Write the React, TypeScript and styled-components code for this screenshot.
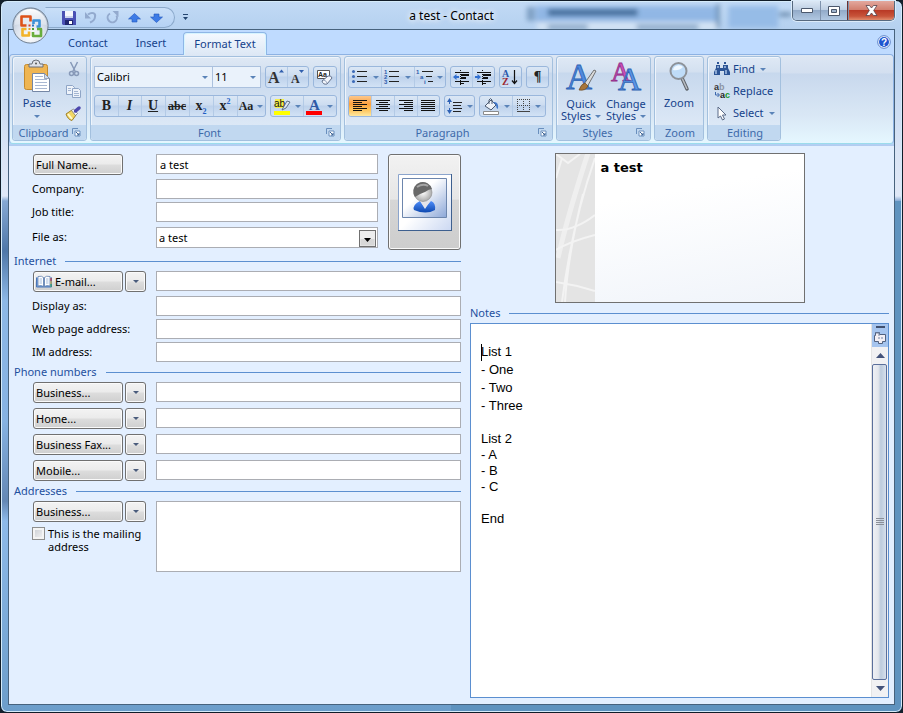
import React from "react";
import styled, { createGlobalStyle, css } from "styled-components";

const ui = `"Noto Sans", "Open Sans", sans-serif`;
const serif = `"Liberation Serif", serif`;
const navy = "#15428b";
const line = "#5b8fd0";

const GlobalStyle = createGlobalStyle`
  * { box-sizing: border-box; }
  html, body, #root { height: 100%; }
  body { margin: 0; background: #14202c; font: 11px/14px ${ui}; color: #000; overflow: hidden; }
  button, input, select, textarea { font: inherit; color: inherit; margin: 0; border-radius: 0; }
  button { padding: 0; border: 0; background: none; }
  svg { display: block; flex: none; overflow: visible; }
`;

/* ---------- window frame ---------- */

const Window = styled.div`
  position: relative;
  display: flex;
  flex-direction: column;
  min-height: 100%;
  padding: 0 7px 7px;
  border: 1px solid #101c28;
  border-radius: 7px;
  background: linear-gradient(90deg, transparent 50%, #5f93bf 50%) 0 200px / 100% 100% no-repeat,
    linear-gradient(180deg, #c2daf5 0, #b4d0ef 30px, #d9e4f5 150px, #dfe8f7 195px, #86a9d4 200px, #4f77a8 250px, #8db8e6 300px, #86b2e2 420px, #6488b5 500px, #8ebae9 520px, #6c9dca 100%);
  box-shadow: inset 0 0 0 1px #d5ebfa;
`;

const Glass = styled.svg`
  position: absolute;
  top: 1px;
  left: 1px;
  width: calc(100% - 2px);
  height: 28px;
  overflow: hidden;
`;

const TitleBar = styled.header`
  position: relative;
  display: grid;
  grid-template-columns: 1fr auto 1fr;
  height: 28px;
`;

const QuickAccess = styled.div`
  display: flex;
  align-items: center;
  gap: 7px;
  width: 130px;
  height: 21px;
  margin: 6px 0 0 37px;
  padding-left: 15px;
  border: 1px solid #8ba9cb;
  border-left-color: transparent;
  border-radius: 0 11px 11px 0;
  background: linear-gradient(#c9dff8, #b5d2f4);
`;

const QuickArea = styled.div`
  display: flex;
  align-items: flex-start;
`;

const IconButton = styled.button`
  display: flex;
  align-items: center;
  justify-content: center;
  width: 15px;
  height: 18px;
`;

const Customize = styled(IconButton)`
  margin: 7px 0 0 3px;
`;

const WindowTitle = styled.h1`
  margin: 0;
  padding-top: 7px;
  font-size: 12px;
  font-weight: 400;
  line-height: 16px;
  text-shadow: 0 0 6px #fff, 0 0 6px #fff;
`;

const Captions = styled.div`
  display: flex;
  justify-self: end;
  height: 20px;
  border: 1px solid #56697f;
  border-top: 0;
  border-radius: 0 0 5px 5px;
  overflow: hidden;
  box-shadow: 0 0 0 1px #dcebf9;
`;

const Caption = styled.button<{ $close?: boolean }>`
  display: flex;
  align-items: center;
  justify-content: center;
  width: ${(p) => (p.$close ? 47 : 27)}px;
  border-left: ${(p) => (p.$close ? "1px solid #6b3030" : "0")};
  background: ${(p) =>
    p.$close
      ? "linear-gradient(#e3a99f 0, #d28070 45%, #b93a26 50%, #c8543a 80%, #e08c6d)"
      : "linear-gradient(#dce8f5 0, #bfd0e4 45%, #93abc9 50%, #b1c8e2)"};
  & + & { box-shadow: inset 1px 0 #7f93ad; }
`;

const Orb = styled.button`
  position: absolute;
  top: 6px;
  left: 11px;
  z-index: 2;
`;

const Client = styled.div`
  position: relative;
  flex: 1;
  display: flex;
  flex-direction: column;
  border: 1px solid #47627d;
  background: #e3efff;
`;

/* ---------- ribbon ---------- */

const TabRow = styled.nav`
  display: flex;
  align-items: flex-end;
  height: 24px;
  padding: 0 3px 0 45px;
  background: #bfdbff;
`;

const Tab = styled.button<{ $active?: boolean }>`
  position: relative;
  z-index: 1;
  height: 23px;
  padding: 0 ${(p) => (p.$active ? 10 : 14)}px;
  color: ${navy};
  white-space: nowrap;
  ${(p) =>
    p.$active &&
    css`
      margin: 0 0 -1px 3px;
      border: 1px solid #8fb6e6;
      border-bottom: 0;
      border-radius: 4px 4px 0 0;
      background: linear-gradient(#f4f9ff, #dde8f5);
      box-shadow: inset 1px 1px #d6f4ff, inset -1px 0 #d6f4ff;
    `}
`;

const Help = styled.button`
  align-self: center;
  margin-left: auto;
`;

const Ribbon = styled.section`
  display: flex;
  gap: 3px;
  height: 90px;
  padding: 1px 2px 2px;
  border: 1px solid #8db2e3;
  border-bottom-color: #9bdcec;
  border-radius: 4px;
  background: linear-gradient(#dde7f4 0, #d3dff0 18px, #c8d8ed 19px, #d9e7f5 60px, #e5f7ff 100%);
`;

const RibbonBack = styled.div`
  padding-bottom: 2px;
  background: linear-gradient(#bfdbff, #bfdbff 86px, #b0cbef 100%);
`;

const Group = styled.fieldset`
  display: flex;
  flex-direction: column;
  height: 85px;
  margin: 0;
  padding: 0;
  min-width: 0;
  border: 1px solid #a3c0de;
  border-radius: 3px;
  background: linear-gradient(#dfe9f5 0, #d3e0f0 15px, #c7d8ed 16px, #dce8f6 68px);
  box-shadow: inset 1px 1px #eef4fb;
`;

const GroupBody = styled.div<{ $tools?: boolean }>`
  flex: 1;
  display: flex;
  flex-direction: ${(p) => (p.$tools ? "column" : "row")};
  gap: ${(p) => (p.$tools ? 7 : 3)}px;
  padding: ${(p) => (p.$tools ? "9px 3px 0" : "0 3px")};
`;

const GroupLabel = styled.div`
  display: grid;
  grid-template-columns: 1fr 14px;
  align-items: center;
  height: 15px;
  padding-left: 2px;
  border-radius: 0 0 3px 3px;
  background: #c1d8f0;
  color: #3e6aaa;
  text-align: center;
`;

const LabelText = styled.span<{ $wide?: boolean }>`
  grid-column: ${(p) => (p.$wide ? "1 / 3" : "1")};
`;

const ToolRow = styled.div`
  display: flex;
  gap: 4px;
  height: 22px;
`;

const ToolSet = styled.div`
  display: flex;
  border: 1px solid #9ab7dc;
  border-radius: 3px;
  background: linear-gradient(#dbe7f5 0, #ccdcf0 45%, #bdd1eb 50%, #d2e2f5);
  overflow: hidden;
`;

const Tool = styled.button<{ $w?: number; $on?: boolean }>`
  display: flex;
  align-items: center;
  justify-content: center;
  gap: 4px;
  width: ${(p) => p.$w ?? 23}px;
  color: #222;
  ${(p) => p.$on && css`background: linear-gradient(#fcc78b 0, #fba03f 40%, #fdc45c 70%, #ffe8a0);`}
  & + & { box-shadow: inset 1px 0 #b3cae6; }
`;

const Glyph = styled.span<{ $size?: number; $italic?: boolean; $line?: string }>`
  font: ${(p) => (p.$italic ? "italic" : "normal")} 700 ${(p) => p.$size ?? 14}px/18px ${serif};
  text-decoration: ${(p) => p.$line ?? "none"};
  white-space: nowrap;
`;

const Script = styled.span<{ $up?: boolean }>`
  color: #1f5fc4;
  font-size: 8px;
  vertical-align: ${(p) => (p.$up ? "super" : "sub")};
  line-height: 8px;
`;

const SelectBox = styled.div<{ $w: number }>`
  display: grid;
  align-items: center;
  width: ${(p) => p.$w}px;
  border: 1px solid #abc1de;
  background: #eaf2fb;
  & > * { grid-area: 1 / 1; }
  & > svg { justify-self: end; margin-right: 4px; pointer-events: none; }
  & + & { margin-left: -4px; border-left: 0; }
`;

const PlainSelect = styled.select`
  appearance: none;
  width: 100%;
  height: 20px;
  padding: 0 2px;
  border: 0;
  background: transparent;
`;

const BigButton = styled.button<{ $w: number }>`
  display: flex;
  flex-direction: column;
  align-items: center;
  width: ${(p) => p.$w}px;
  padding-top: 4px;
  color: ${navy};
  line-height: 12px;
  & > svg:first-child { margin-bottom: 5px; }
`;

const WithArrow = styled.span`
  display: flex;
  align-items: center;
  gap: 4px;
`;

const ArrowSlot = styled.span`
  padding-top: 6px;
`;

const SmallStack = styled.div<{ $w: number; $start?: boolean }>`
  display: flex;
  flex-direction: column;
  align-items: ${(p) => (p.$start ? "flex-start" : "center")};
  width: ${(p) => p.$w}px;
  padding-top: 1px;
`;

const SmallButton = styled.button`
  display: flex;
  align-items: center;
  gap: 3px;
  height: 22px;
  padding-left: 3px;
  color: ${navy};
`;

const ButtonText = styled.span`
  margin-right: 2px;
`;

/* ---------- form ---------- */

const Content = styled.main`
  flex: 1;
  display: grid;
  grid-template-columns: 447fr 419fr;
  gap: 9px;
  padding: 7px 5px 6px;
`;

const Form = styled.form`
  padding-top: 1px;
`;

const Identity = styled.div`
  display: grid;
  grid-template-columns: 1fr 73px;
  gap: 10px;
  height: 99px;
`;

const Row = styled.div<{ $pitch?: number }>`
  display: grid;
  grid-template-columns: 124px 1fr;
  align-items: start;
  height: ${(p) => p.$pitch ?? 23}px;
  padding-left: 18px;
`;

const Heading = styled.h2`
  display: flex;
  align-items: center;
  gap: 9px;
  height: 16px;
  margin: 0 0 2px;
  color: #1f4f9e;
  font-size: 11px;
  font-weight: 400;
  &::after { content: ""; flex: 1; height: 1px; background: ${line}; }
`;

const Label = styled.label`
  line-height: 20px;
`;

const Field = styled.input`
  width: 100%;
  height: 20px;
  padding: 0 3px;
  border: 1px solid #abadb3;
  background: #fff;
`;

const Address = styled.textarea`
  width: 100%;
  height: 71px;
  border: 1px solid #abadb3;
  resize: none;
`;

const Pair = styled.div`
  display: flex;
  gap: 2px;
  padding-left: 1px;
`;

const PushButton = styled.button<{ $w?: number }>`
  display: flex;
  align-items: center;
  justify-content: ${(p) => (p.$w ? "center" : "flex-start")};
  gap: 3px;
  width: ${(p) => p.$w ?? 90}px;
  height: 21px;
  padding: 0 2px;
  border: 1px solid #707070;
  border-radius: 3px;
  background: linear-gradient(#f3f3f3 0, #ebebeb 48%, #dddddd 52%, #cfcfcf);
  box-shadow: inset 0 0 0 1px #fafafa;
  white-space: nowrap;
`;

const FileAs = styled.div`
  display: grid;
  align-items: center;
  height: 21px;
  border: 1px solid #abadb3;
  background: #fff;
  & > * { grid-area: 1 / 1; }
  & > svg { justify-self: end; margin-right: 1px; pointer-events: none; }
`;

const Photo = styled.button`
  display: flex;
  align-items: center;
  justify-content: center;
  height: 96px;
  border: 1px solid #707070;
  border-radius: 3px;
  background: linear-gradient(#f2f2f2 0, #e6e6e6 47%, #d6d6d6 48%, #cdcdcd);
  box-shadow: inset 0 0 0 1px #fafafa;
`;

const Mailing = styled.label`
  display: flex;
  gap: 3px;
  padding-top: 5px;
  line-height: 13px;
`;

const Check = styled.input`
  appearance: none;
  flex: none;
  width: 13px;
  height: 13px;
  border: 1px solid #8e8f8f;
  background: linear-gradient(135deg, #c8ccd2, #f6f6f6);
  box-shadow: inset 0 0 0 2px #f4f4f4;
`;

/* ---------- card and notes ---------- */

const Side = styled.div`
  display: flex;
  flex-direction: column;
`;

const Card = styled.article`
  display: flex;
  align-self: center;
  width: 250px;
  height: 150px;
  margin-bottom: 2px;
  border: 1px solid #707070;
  background: linear-gradient(170deg, #ffffff 30%, #f0f4fa);
`;

const CardName = styled.strong`
  padding: 6px;
  font: 700 13px/16px "DejaVu Sans", sans-serif;
`;

const Notes = styled.div`
  flex: 1;
  display: flex;
  border: 1px solid ${line};
  background: #fff;
`;

const NoteText = styled.div`
  flex: 1;
  padding: 19px 10px 0;
  font: 13px/16px "Liberation Sans", Arial, sans-serif;
  outline: none;
`;

const NoteLine = styled.p<{ $loose?: boolean }>`
  margin: 0;
  height: ${(p) => (p.$loose ? 18 : 16)}px;
  line-height: ${(p) => (p.$loose ? 18 : 16)}px;
`;

const Caret = styled.span`
  display: inline-block;
  width: 1px;
  height: 17px;
  margin-right: -1px;
  vertical-align: middle;
  background: #000;
`;

const ScrollBar = styled.div`
  display: flex;
  flex-direction: column;
  width: 17px;
  border-left: 1px solid #e4e4e4;
  background: #f1f1f3;
`;

const Ruler = styled.button`
  height: 23px;
  background: #a5c4ee;
`;

const ScrollStep = styled(IconButton)`
  width: 16px;
  height: 17px;
`;

const Thumb = styled.div`
  flex: 1;
  display: flex;
  align-items: center;
  justify-content: center;
  margin-right: 1px;
  border: 1px solid #5b6f9b;
  border-radius: 2px;
  background: linear-gradient(90deg, #eef0f5, #e3e6ec 40%, #bccbdd 60%, #d7e0ec);
`;

/* ---------- icons ---------- */

const Arrow = ({ color = "#5a83b8" }: { color?: string }) => (
  <svg width="6" height="3" viewBox="0 0 6 3"><path d="M0 0h6L3 3z" fill={color} /></svg>
);

const Launcher = () => (
  <svg width="9" height="9" viewBox="0 0 9 9" fill="none" stroke="#6a8fbd">
    <path d="M.5 6V.5H6" /><path d="M3 3h5v5H3z" fill="#fff" /><path d="M4 4l3 3M7 5v2H5" stroke="#3d6496" />
  </svg>
);

const OfficeLogo = () => (
  <svg width="37" height="37" viewBox="0 0 37 37">
    <defs>
      <radialGradient id="orb" cx=".5" cy=".8" r=".8">
        <stop offset="0" stopColor="#fff" /><stop offset=".5" stopColor="#dde3ed" /><stop offset="1" stopColor="#aebdce" />
      </radialGradient>
      <linearGradient id="orbTop" x2="0" y2="1"><stop stopColor="#fff" /><stop offset="1" stopColor="#e5eaf2" stopOpacity=".6" /></linearGradient>
    </defs>
    <circle cx="18.5" cy="18.5" r="17.6" fill="url(#orb)" stroke="#707f91" />
    <path d="M2.500 18a16 16 0 0 1 32 0q-16-3-32 0z" fill="url(#orbTop)" />
    <g fill="none" strokeWidth="2.600" strokeLinejoin="round">
      <path d="M14.500 18.500H9.500V9.500h9v5" stroke="#de5219" />
      <path d="M21.500 17v-3.500h6v6h-3" stroke="#3b91d8" />
      <path d="M14.500 22h-4v6.500h6.500v-4" stroke="#f2b32a" />
      <path d="M21 25v4h8v-7h-4" stroke="#69ad3c" />
    </g>
    <path d="M16.500 17.500h2v2h-2z" fill="#d63e2a" /><path d="M20 17.500h2v2h-2z" fill="#2b79c2" />
    <path d="M16.500 21h2v2h-2z" fill="#e9a020" /><path d="M20 21h2v2h-2z" fill="#4c9b35" />
  </svg>
);

const Save = () => (
  <svg width="14" height="14" viewBox="0 0 14 14">
    <path d="M0 0h13l1 1v13H1l-1-1z" fill="#4950b4" /><path d="M3 0h8v7H3z" fill="#f4f6fc" />
    <path d="M3 5h8v2H3z" fill="#cbd3ec" /><path d="M3 9h8v5H3z" fill="#20266e" /><path d="M7 10h3v3H7z" fill="#fff" />
  </svg>
);

const Undo = () => (
  <svg width="13" height="13" viewBox="0 0 13 13" fill="none" stroke="#93aace" strokeWidth="2">
    <path d="M4 3.500C8 .5 12 2 11 6c-.3 3-2.500 4.500-5 5.500" /><path d="M1 1v6.500h6z" fill="#93aace" stroke="none" />
  </svg>
);

const Redo = () => (
  <svg width="13" height="13" viewBox="0 0 13 13" fill="none" stroke="#93aace" strokeWidth="2">
    <path d="M4 2.500a4.700 4.700 0 1 0 6.500 2" /><path d="M6.500 0h6v6z" fill="#93aace" stroke="none" />
  </svg>
);

const Nav = ({ down }: { down?: boolean }) => (
  <svg width="13" height="10" viewBox="0 0 13 10">
    {down ? (
      <path d="M4 1h5v3h3.500l-6 5.500L.5 4H4z" fill="#3d7be6" stroke="#2458bd" strokeWidth=".6" />
    ) : (
      <path d="M6.500.5l6 5.500H9v3H4V6H.5z" fill="#3d7be6" stroke="#2458bd" strokeWidth=".6" />
    )}
  </svg>
);

const Paste = () => (
  <svg width="28" height="31" viewBox="0 0 28 31">
    <rect x="1.500" y="3.500" width="23" height="25" rx="2" fill="#efb552" stroke="#c48a2e" />
    <path d="M6 6h14V3h-3a4 4 0 0 0-8 0H6z" fill="#dfe2e7" stroke="#6a6f78" /><circle cx="13" cy="2.500" r="1" fill="#555" />
    <path d="M9.500 12.500h12l5 5v13h-17z" fill="#fff" stroke="#7587a5" /><path d="M21.500 12.500v5h5z" fill="#d5deec" stroke="#7587a5" strokeWidth=".7" />
    <path d="M12 15.500h8M12 18.500h12M12 21.500h12M12 24.500h12M12 27.500h12" stroke="#a9b8d2" />
  </svg>
);

const Cut = () => (
  <svg width="14" height="16" viewBox="0 0 14 16" fill="none" stroke="#8799b8" strokeWidth="1.500">
    <path d="M3.500 1l5 10M10.500 1l-5 10" /><circle cx="4.500" cy="12.500" r="2" /><circle cx="9.500" cy="12.500" r="2" />
  </svg>
);

const Copy = () => (
  <svg width="15" height="14" viewBox="0 0 15 14" fill="#eef3fa" stroke="#8fa5c6">
    <path d="M.5 1.500h6l2 2v7h-8z" /><path d="M6.500 4.500h6l2 2v7h-8z" /><path d="M2 4.500h3M2 6.500h3M8 7.500h4M8 9.500h5M8 11.500h5" strokeWidth=".8" />
  </svg>
);

const Brush = () => (
  <svg width="17" height="15" viewBox="0 0 17 15">
    <path d="M1 8l6-4 4 5-4 5.500C4 14 2 11 1 8z" fill="#f2d766" stroke="#a08127" /><path d="M3 8l4 5" stroke="#fff8cf" strokeWidth="2" />
    <path d="M6.500 4.500l2-1.500 4 4.500-2 2z" fill="#fff" stroke="#666" strokeWidth=".7" /><path d="M10.500 5L14 2" stroke="#4d48ae" strokeWidth="3.500" strokeLinecap="round" />
  </svg>
);

const GrowA = ({ shrink }: { shrink?: boolean }) => (
  <svg width="17" height="18" viewBox="0 0 17 18">
    <text x={shrink ? 2 : 0} y="15" fontFamily="Liberation Serif, serif" fontWeight="700" fontSize={shrink ? 12 : 16} fill="#333">A</text>
    <path d={shrink ? "M10 2h5l-2.500 3z" : "M11 4.500h5L13.500 1.500z"} fill="#315fae" />
  </svg>
);

const ClearFormat = () => (
  <svg width="18" height="18" viewBox="0 0 18 18">
    <path d="M1.500 2.500h12v8h-12z" fill="#fff" stroke="#555" />
    <text x="2" y="9" fontFamily="Liberation Sans, sans-serif" fontWeight="700" fontSize="7" fill="#222">Aa</text>
    <path d="M6 13l6-5q3-1 4 2l-5 6q-4 1-5-3z" fill="#f3f6fb" stroke="#63718c" /><path d="M7 12q3 0 4 3" stroke="#9aa8c0" fill="none" />
  </svg>
);

const Highlight = () => (
  <svg width="17" height="17" viewBox="0 0 17 17">
    <path d="M1 1h9v9H1z" fill="#f5ee4c" /><text x="0" y="9" fontFamily="Liberation Sans, sans-serif" fontSize="10" fill="#111">ab</text>
    <path d="M9 10l4-7 3 1-4 6-4 2z" fill="#dce6f4" stroke="#56677f" strokeWidth=".9" /><path d="M0 13h16v4H0z" fill="#ff0" />
  </svg>
);

const FontColor = () => (
  <svg width="17" height="17" viewBox="0 0 17 17">
    <text x="3" y="12" fontFamily="Liberation Serif, serif" fontWeight="700" fontSize="15" fill="#2f5aa5">A</text><path d="M0 13h16v4H0z" fill="#f00" />
  </svg>
);

const Bullets = ({ kind }: { kind: "dot" | "num" | "multi" }) => (
  <svg width="17" height="16" viewBox="0 0 17 16">
    {kind === "multi" ? (
      <path d="M6 2.500h11M10 7.500h6M12 12.500h5" stroke="#222" />
    ) : (
      <path d="M5 2.500h10M5 7.500h10M5 12.500h10" stroke="#222" />
    )}
    {kind === "dot" &&
      [2.5, 7.5, 12.5].map((y) => <circle key={y} cx="1.500" cy={y} r="1.500" fill="#3c6ab8" />)}
    {kind !== "dot" &&
      (kind === "num" ? ["1", "2", "3"] : ["1", "a", "i"]).map((t, i) => (
        <text key={t} x={kind === "num" ? 0 : i * 4} y={5 + i * 5} fontFamily="Liberation Sans, sans-serif" fontWeight="700" fontSize="6" fill="#2c5bac">{t}</text>
      ))}
  </svg>
);

const Indent = ({ more }: { more?: boolean }) => (
  <svg width="17" height="15" viewBox="0 0 17 15" stroke="#111">
    <path d="M2 2.500h14M2 11.500h14M7 13.500h4" /><path d="M8 5h8M8 8h5" strokeWidth="2" />
    <path d="M7.500 0v15" strokeDasharray="1 1" /><path d={more ? "M6 7L2.500 4v2H0v2h2.500v2z" : "M0 7l3.500-3v2H6v2H3.500v2z"} fill="#3270d0" stroke="none" />
  </svg>
);

const Sort = () => (
  <svg width="17" height="17" viewBox="0 0 17 17">
    <text x="0" y="8" fontFamily="Liberation Serif, serif" fontWeight="700" fontSize="10" fill="#2c5bac">A</text>
    <text x="0" y="16" fontFamily="Liberation Serif, serif" fontWeight="700" fontSize="10" fill="#9c2733">Z</text>
    <path d="M12.500 1v13M10 11.500l2.500 3 2.500-3" stroke="#111" fill="none" strokeWidth="1.200" />
  </svg>
);

const alignPaths = {
  left: "M0 1.500h14M0 3.500h9M0 5.500h14M0 7.500h9M0 9.500h14M0 11.500h9",
  center: "M0 1.500h14M3 3.500h9M0 5.500h14M3 7.500h9M0 9.500h14M3 11.500h9",
  right: "M0 1.500h14M5 3.500h9M0 5.500h14M5 7.500h9M0 9.500h14M5 11.500h9",
  justify: "M0 1.500h14M0 3.500h14M0 5.500h14M0 7.500h14M0 9.500h14M0 11.500h14",
};

const Align = ({ kind }: { kind: keyof typeof alignPaths }) => (
  <svg width="14" height="14" viewBox="0 0 14 14"><path d={alignPaths[kind]} stroke="#111" /></svg>
);

const Spacing = () => (
  <svg width="16" height="16" viewBox="0 0 16 16">
    <path d="M6 4.500h9M6 7.500h8M6 10.500h9M6 13.500h8" stroke="#222" /><path d="M2.500 2v4M2.500 10v4" stroke="#2f62b5" />
    <path d="M2.500 0L5 4H0zM2.500 16L5 12H0z" fill="#2f62b5" />
  </svg>
);

const Fill = () => (
  <svg width="17" height="17" viewBox="0 0 17 17">
    <path d="M2 8l6-6 5 5-5 5z" fill="#eef3fa" stroke="#4c5a70" /><path d="M6 6V2q1.500-3 3 0v4" stroke="#4c5a70" fill="none" />
    <path d="M10 4q6-1 5 7-2-1-2-4z" fill="#3f76c9" /><path d="M.5 13.500h15v3H.5z" fill="#fff" stroke="#8b8b8b" />
  </svg>
);

const Borders = () => (
  <svg width="14" height="14" viewBox="0 0 14 14" stroke="#444">
    <path d="M.5 0v13M6.500 0v13M12.500 0v13M0 .5h13M0 6.500h13" strokeDasharray="1 1" /><path d="M0 12.500h13" />
  </svg>
);

const StyleA = () => (
  <svg width="31" height="32" viewBox="0 0 31 32">
    <text x="0" y="28" fontFamily="Liberation Serif, serif" fontSize="36" fill="#4f8be0" stroke="#2e62b2" strokeWidth=".8">A</text>
    <path d="M18 23L28 9l2 1-9 16z" fill="#dadada" stroke="#555" strokeWidth=".8" />
    <path d="M13 29q2-6 6-7l3 3q-2 5-9 4z" fill="#a8763a" stroke="#6c4720" strokeWidth=".7" />
  </svg>
);

const ChangeA = () => (
  <svg width="31" height="32" viewBox="0 0 31 32" fontFamily="Liberation Serif, serif" strokeWidth=".8">
    <text x="0" y="20" fontSize="27" fill="#cc4fba" stroke="#94328b">A</text>
    <text x="7" y="29" fontSize="32" fill="#5b96e6" stroke="#2e62b2">A</text>
  </svg>
);

const Magnifier = () => (
  <svg width="22" height="31" viewBox="0 0 22 31">
    <path d="M14 17l5 11" stroke="#5f646b" strokeWidth="3.500" strokeLinecap="round" /><path d="M14 17l5 11" stroke="#b9bdc3" strokeWidth="1.500" />
    <circle cx="10.500" cy="10" r="8" fill="#bfdcf8" stroke="#8d9299" strokeWidth="2" /><path d="M5 9a6 6 0 0 1 10-3q-4 4-10 3z" fill="#f0f8ff" />
  </svg>
);

const Binoculars = () => (
  <svg width="16" height="14" viewBox="0 0 16 14" fill="#2c5495">
    <path d="M2 3h4v3h3V3h5v3l2 4v3h-6V9H6v4H0v-3l2-4z" /><path d="M3 0h2v2H3zM10 0h2v2h-2z" />
    <path d="M2 8v4M12 8v4M4 4v2M11 4v2" stroke="#bcd3f2" strokeWidth="1.300" />
  </svg>
);

const ReplaceIcon = () => (
  <svg width="16" height="16" viewBox="0 0 16 16" fontFamily="Liberation Sans, sans-serif" fontWeight="700" fontSize="9">
    <text x="0" y="7" fill="#333">a</text><text x="5" y="7" fill="#8d95a3">b</text>
    <text x="6" y="15" fill="#222">a</text><text x="11" y="15" fill="#18962a">c</text>
    <path d="M1.500 9v3H5M3.500 10l2 2-2 2" fill="none" stroke="#3b67ac" />
  </svg>
);

const Pointer = () => (
  <svg width="16" height="15" viewBox="0 0 16 15"><path d="M4 1l8 8H8.500l2 4-2 1-2-4L4 12z" fill="#fff" stroke="#5a6b88" /></svg>
);

const HelpIcon = () => (
  <svg width="14" height="14" viewBox="0 0 14 14">
    <circle cx="7" cy="7" r="6.300" fill="#fff" stroke="#5b82c8" /><circle cx="7" cy="7" r="5" fill="#1f55d0" />
    <text x="4" y="11" fontFamily="Liberation Sans, sans-serif" fontWeight="700" fontSize="10" fill="#fff">?</text>
  </svg>
);

const Book = () => (
  <svg width="16" height="14" viewBox="0 0 16 14">
    <path d="M.5 2.500V12h15V2.500" fill="#7aa5e0" stroke="#4a76b8" /><path d="M2 1.500q4-1 5.500 1v9q-2-1.500-5.500-.5zM14 1.500q-4-1-5.500 1v9q2-1.500 5.500-.5z" fill="#fff" stroke="#5f7eac" strokeWidth=".8" />
    <path d="M3.500 4h2.500M3.500 6h2.500M3.500 8h2.500M10 4h2.500M10 6h2.500M10 8h2.500" stroke="#8ea9d2" strokeWidth=".8" /><path d="M15 3v3" stroke="#d33" /><path d="M15 6v3" stroke="#eb3" /><path d="M15 9v3" stroke="#3a5" />
  </svg>
);

const ComboArrow = () => (
  <svg width="17" height="17" viewBox="0 0 17 17">
    <rect x=".5" y=".5" width="16" height="16" fill="#ededed" stroke="#707070" /><path d="M1.500 9h14v6.500h-14z" fill="#d7d7d7" /><path d="M5 8h7l-3.500 4z" fill="#000" />
  </svg>
);

const Portrait = () => (
  <svg width="54" height="57" viewBox="0 0 54 57">
    <defs>
      <linearGradient id="pic" x2="1" y2="1"><stop offset=".4" stopColor="#fff" /><stop offset="1" stopColor="#8ca7d8" /></linearGradient>
      <linearGradient id="paper" x2="1" y2="1"><stop offset=".5" stopColor="#fff" /><stop offset="1" stopColor="#cbd8f2" /></linearGradient>
      <radialGradient id="face"><stop stopColor="#fff" /><stop offset="1" stopColor="#aaa" /></radialGradient>
      <linearGradient id="shirt" x2="0" y2="1"><stop stopColor="#4e8dfa" /><stop offset="1" stopColor="#0d48b0" /></linearGradient>
    </defs>
    <path d="M.5.5h53v56H.5z" fill="url(#paper)" stroke="#8ba4cc" /><path d="M53.500 0v57M0 56.500h54" stroke="#3e608f" />
    <path d="M4.500 4.500h44v39h-44z" fill="url(#pic)" stroke="#6d86ad" />
    <path d="M16 36q-2-5 6-9l5 7 6-7q5 2 4 9-9 5-21 0z" fill="url(#shirt)" /><path d="M22 27h10l-5 8z" fill="#e4e4ea" />
    <circle cx="25" cy="18.500" r="9" fill="url(#face)" stroke="#8a8a8a" strokeWidth=".6" /><path d="M15.500 20a9.500 9.500 0 0 1 18.500-5q-3 0-7 3-6 2-10 5z" fill="#686868" />
    <path d="M19 13q6-4 11-1" stroke="#a5a5a5" fill="none" strokeWidth="2" />
  </svg>
);

const CardArt = () => (
  <svg width="39" height="148" viewBox="0 0 39 148">
    <defs><clipPath id="strip"><path d="M0 0h39v148H0z" /></clipPath></defs>
    <g clipPath="url(#strip)" fill="none" stroke="#f3f3f3">
      <path d="M0 0h39v148H0z" fill="#e4e4e4" stroke="none" />
      <path d="M33-4Q12 60 2 104" strokeWidth="5" opacity=".7" /><path d="M39 4Q16 70 6 148M27 40Q12 100 9 148" strokeWidth="2" />
      <path d="M0 0l12 9L24 0M0 24l6-20" strokeWidth="2" /><path d="M0 76Q18 77 39 61M0 96Q15 87 39 81" strokeWidth="2" />
      <path d="M0 128Q20 131 39 137" strokeWidth="2" />
    </g>
  </svg>
);

const BackdropBlur = () => (
  <Glass viewBox="0 0 901 28" preserveAspectRatio="none" aria-hidden="true">
    <defs><filter id="soft" x="-20%" y="-50%" width="140%" height="200%"><feGaussianBlur stdDeviation="2.500" /></filter></defs>
    <g filter="url(#soft)">
      <path d="M535 4h182v17H535z" fill="#83ade0" opacity=".75" /><path d="M547 7h90v7h-90z" fill="#466f9d" />
      <path d="M536 20h180v8H536z" fill="#d4e4f5" /><path d="M547 23h40v4h-40zM636 23h62v4h-62z" fill="#6e94ba" />
      <path d="M716 2h3v24h-3z" fill="#6387ab" /><path d="M728 4h50v22h-50z" fill="#96bce7" /><path d="M526 5h8v14h-8z" fill="#7fa0c5" />
      <path d="M779 10h12v5h-12z" fill="#7696b8" />
    </g>
  </Glass>
);

/* ---------- parts ---------- */

const RibbonGroup = ({ title, tools, launcher = true, children }: { title: string; tools?: boolean; launcher?: boolean; children: React.ReactNode }) => (
  <Group aria-label={title}>
    <GroupBody $tools={tools}>{children}</GroupBody>
    <GroupLabel>
      <LabelText $wide={!launcher}>{title}</LabelText>
      {launcher && <button type="button" aria-label={`${title} options`}><Launcher /></button>}
    </GroupLabel>
  </Group>
);

const LabelledField = ({ id, label, pitch }: { id: string; label: string; pitch?: number }) => (
  <Row $pitch={pitch}><Label htmlFor={id}>{label}</Label><Field id={id} /></Row>
);

const ButtonPair = ({ children, name }: { children: React.ReactNode; name: string }) => (
  <Pair>
    <PushButton type="button">{children}</PushButton>
    <PushButton type="button" $w={21} aria-label={`Choose ${name}`}><Arrow color="#4a5c7c" /></PushButton>
  </Pair>
);

const phones = ["Business", "Home", "Business Fax", "Mobile"];

const notes: { text: string; loose?: boolean }[] = [
  { text: "List 1", loose: true }, { text: "- One", loose: true }, { text: "- Two", loose: true }, { text: "- Three", loose: true },
  { text: "" }, { text: "List 2" }, { text: "- A" }, { text: "- B" }, { text: "- C" }, { text: "" }, { text: "End" },
];

export default function App() {
  return (
    <>
      <GlobalStyle />
      <Window>
        <BackdropBlur />
        <Orb aria-label="Office Button"><OfficeLogo /></Orb>
        <TitleBar>
          <QuickArea>
            <QuickAccess>
              <IconButton aria-label="Save"><Save /></IconButton>
              <IconButton aria-label="Undo"><Undo /></IconButton>
              <IconButton aria-label="Redo"><Redo /></IconButton>
              <IconButton aria-label="Previous item"><Nav /></IconButton>
              <IconButton aria-label="Next item"><Nav down /></IconButton>
            </QuickAccess>
            <Customize aria-label="Customize toolbar">
              <svg width="5" height="6" viewBox="0 0 5 6" fill="#24456f"><path d="M0 0h5v1H0zM0 3h5L2.500 6z" /></svg>
            </Customize>
          </QuickArea>
          <WindowTitle>a test - Contact</WindowTitle>
          <Captions>
            <Caption aria-label="Minimize">
              <svg width="12" height="5" viewBox="0 0 12 5"><path d="M.5.5h11v4H.5z" fill="#fff" stroke="#4b586d" /></svg>
            </Caption>
            <Caption aria-label="Maximize">
              <svg width="12" height="10" viewBox="0 0 12 10" stroke="#4b586d"><path d="M.5.5h11v9H.5z" fill="#fff" /><path d="M3.500 3.500h5v3h-5z" fill="#9eb3cd" /></svg>
            </Caption>
            <Caption $close aria-label="Close">
              <svg width="13" height="11" viewBox="0 0 13 11"><path d="M1 .5h3.500l2 2.500 2-2.500H12L8.700 5.500 12 10.500H8.500l-2-2.500-2 2.500H1l3.300-5z" fill="#fff" stroke="#53424b" strokeWidth=".8" /></svg>
            </Caption>
          </Captions>
        </TitleBar>

        <Client>
          <TabRow>
            <Tab>Contact</Tab>
            <Tab>Insert</Tab>
            <Tab $active>Format Text</Tab>
            <Help aria-label="Help"><HelpIcon /></Help>
          </TabRow>
          <RibbonBack>
            <Ribbon>
              <RibbonGroup title="Clipboard">
                <BigButton $w={42}><Paste />Paste<ArrowSlot><Arrow /></ArrowSlot></BigButton>
                <SmallStack $w={22}>
                  <SmallButton aria-label="Cut"><Cut /></SmallButton>
                  <SmallButton aria-label="Copy"><Copy /></SmallButton>
                  <SmallButton aria-label="Format Painter"><Brush /></SmallButton>
                </SmallStack>
              </RibbonGroup>

              <RibbonGroup title="Font" tools>
                <ToolRow>
                  <SelectBox $w={119}><PlainSelect aria-label="Font"><option>Calibri</option></PlainSelect><Arrow /></SelectBox>
                  <SelectBox $w={48}><PlainSelect aria-label="Font size"><option>11</option></PlainSelect><Arrow /></SelectBox>
                  <ToolSet>
                    <Tool $w={21} aria-label="Grow font"><GrowA /></Tool>
                    <Tool $w={21} aria-label="Shrink font"><GrowA shrink /></Tool>
                  </ToolSet>
                  <ToolSet><Tool $w={22} aria-label="Clear formatting"><ClearFormat /></Tool></ToolSet>
                </ToolRow>
                <ToolRow>
                  <ToolSet>
                    <Tool><Glyph>B</Glyph></Tool>
                    <Tool><Glyph $italic>I</Glyph></Tool>
                    <Tool $w={24}><Glyph $line="underline">U</Glyph></Tool>
                    <Tool $w={24}><Glyph $size={12} $line="line-through">abc</Glyph></Tool>
                    <Tool $w={24}><Glyph>x<Script>2</Script></Glyph></Tool>
                    <Tool $w={24}><Glyph>x<Script $up>2</Script></Glyph></Tool>
                    <Tool $w={28}><Glyph $size={12}>Aa</Glyph><Arrow /></Tool>
                  </ToolSet>
                  <ToolSet>
                    <Tool $w={32} aria-label="Highlight"><Highlight /><Arrow /></Tool>
                    <Tool $w={33} aria-label="Font colour"><FontColor /><Arrow /></Tool>
                  </ToolSet>
                </ToolRow>
              </RibbonGroup>

              <RibbonGroup title="Paragraph" tools>
                <ToolRow>
                  <ToolSet>
                    <Tool $w={32} aria-label="Bullets"><Bullets kind="dot" /><Arrow /></Tool>
                    <Tool $w={33} aria-label="Numbering"><Bullets kind="num" /><Arrow /></Tool>
                    <Tool $w={31} aria-label="Multilevel list"><Bullets kind="multi" /><Arrow /></Tool>
                  </ToolSet>
                  <ToolSet>
                    <Tool $w={21} aria-label="Decrease indent"><Indent /></Tool>
                    <Tool $w={22} aria-label="Increase indent"><Indent more /></Tool>
                  </ToolSet>
                  <ToolSet><Tool $w={21} aria-label="Sort"><Sort /></Tool></ToolSet>
                  <ToolSet><Tool $w={21}><Glyph>¶</Glyph></Tool></ToolSet>
                </ToolRow>
                <ToolRow>
                  <ToolSet>
                    <Tool $w={22} $on aria-label="Align left"><Align kind="left" /></Tool>
                    <Tool aria-label="Center"><Align kind="center" /></Tool>
                    <Tool aria-label="Align right"><Align kind="right" /></Tool>
                    <Tool $w={22} aria-label="Justify"><Align kind="justify" /></Tool>
                  </ToolSet>
                  <ToolSet><Tool $w={29} aria-label="Line spacing"><Spacing /><Arrow /></Tool></ToolSet>
                  <ToolSet>
                    <Tool $w={32} aria-label="Shading"><Fill /><Arrow /></Tool>
                    <Tool $w={33} aria-label="Borders"><Borders /><Arrow /></Tool>
                  </ToolSet>
                </ToolRow>
              </RibbonGroup>

              <RibbonGroup title="Styles">
                <BigButton $w={42}><StyleA />Quick<WithArrow>Styles<Arrow /></WithArrow></BigButton>
                <BigButton $w={42}><ChangeA />Change<WithArrow>Styles<Arrow /></WithArrow></BigButton>
              </RibbonGroup>

              <RibbonGroup title="Zoom" launcher={false}>
                <BigButton $w={42}><Magnifier />Zoom</BigButton>
              </RibbonGroup>

              <RibbonGroup title="Editing" launcher={false}>
                <SmallStack $w={66} $start>
                  <SmallButton><Binoculars /><ButtonText>Find</ButtonText><Arrow /></SmallButton>
                  <SmallButton><ReplaceIcon />Replace</SmallButton>
                  <SmallButton><Pointer /><ButtonText>Select</ButtonText><Arrow /></SmallButton>
                </SmallStack>
              </RibbonGroup>
            </Ribbon>
          </RibbonBack>

          <Content>
            <Form>
              <Identity>
                <div>
                  <Row $pitch={25}>
                    <Pair><PushButton type="button">Full Name...</PushButton></Pair>
                    <Field aria-label="Full Name" defaultValue="a test" />
                  </Row>
                  <LabelledField id="company" label="Company:" />
                  <LabelledField id="job" label="Job title:" pitch={25} />
                  <Row>
                    <Label htmlFor="fileas">File as:</Label>
                    <FileAs><PlainSelect id="fileas"><option>a test</option></PlainSelect><ComboArrow /></FileAs>
                  </Row>
                </div>
                <Photo type="button" aria-label="Contact picture"><Portrait /></Photo>
              </Identity>

              <Heading>Internet</Heading>
              <Row $pitch={25}>
                <ButtonPair name="e-mail"><Book />E-mail...</ButtonPair>
                <Field aria-label="E-mail" />
              </Row>
              <LabelledField id="display" label="Display as:" />
              <LabelledField id="web" label="Web page address:" />
              <LabelledField id="im" label="IM address:" pitch={22} />

              <Heading>Phone numbers</Heading>
              {phones.map((p, i) => (
                <Row key={p} $pitch={i === 3 ? 23 : 26}>
                  <ButtonPair name={`${p} phone`}>{p}...</ButtonPair>
                  <Field aria-label={`${p} phone`} />
                </Row>
              ))}

              <Heading>Addresses</Heading>
              <Row $pitch={71}>
                <div>
                  <ButtonPair name="address">Business...</ButtonPair>
                  <Mailing><Check type="checkbox" />This is the mailing<br />address</Mailing>
                </div>
                <Address aria-label="Business address" />
              </Row>
            </Form>

            <Side>
              <Card><CardArt /><CardName>a test</CardName></Card>
              <Heading>Notes</Heading>
              <Notes>
                <NoteText contentEditable suppressContentEditableWarning role="textbox" aria-label="Notes" aria-multiline="true">
                  {notes.map((n, i) => (
                    <NoteLine key={i} $loose={n.loose}>{i === 0 && <Caret />}{n.text}</NoteLine>
                  ))}
                </NoteText>
                <ScrollBar>
                  <Ruler aria-label="Show ruler">
                    <svg width="16" height="23" viewBox="0 0 16 23">
                      <path d="M4 2h9v2H4z" fill="#40506f" />
                      <path d="M2.500 11.500h1v-3h4v2h6v7h-3v2h-4v-2h-4z" fill="#f3eff4" stroke="#51617f" /><path d="M4 9h3v3M6 14h2M10 13v2" stroke="#7586a5" fill="none" />
                    </svg>
                  </Ruler>
                  <ScrollStep aria-label="Scroll up"><svg width="9" height="5" viewBox="0 0 9 5"><path d="M4.500 0L9 5H0z" fill="#43527a" /></svg></ScrollStep>
                  <Thumb><svg width="8" height="8" viewBox="0 0 8 8"><path d="M0 .5h8M0 2.500h8M0 4.500h8M0 6.500h8" stroke="#8b8f98" /></svg></Thumb>
                  <ScrollStep aria-label="Scroll down"><svg width="9" height="5" viewBox="0 0 9 5"><path d="M0 0h9L4.500 5z" fill="#43527a" /></svg></ScrollStep>
                </ScrollBar>
              </Notes>
            </Side>
          </Content>
        </Client>
      </Window>
    </>
  );
}
